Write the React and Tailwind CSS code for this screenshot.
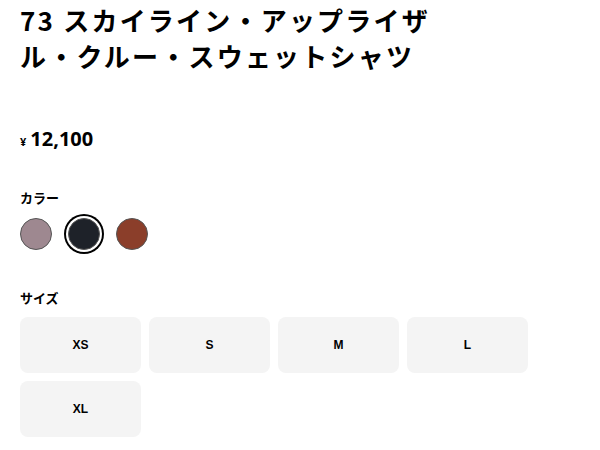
export default function App() {
  const colors = [
    { name: "mauve", cls: "bg-[#9e8890]" },
    { name: "black", cls: "bg-[#1e2229]", selected: true },
    { name: "brown", cls: "bg-[#8b3e2a]" },
  ];
  const sizes = ["XS", "S", "M", "L", "XL"];

  return (
    <div
      className="min-h-screen w-full bg-white px-5 text-black"
      style={{ fontFamily: '"Noto Sans", "Noto Sans CJK JP", sans-serif' }}
    >
      <h1
        className="w-[445px] pt-[2px] text-[26px] font-bold leading-[36px] tracking-[0.085em]"
        style={{ fontFamily: '"Noto Sans CJK JP", sans-serif' }}
      >
        73 スカイライン・アップライザル・クルー・スウェットシャツ
      </h1>

      <p className="mt-[50px] flex items-baseline font-bold">
        <span className="mr-[4px] text-[11px]">¥</span>
        <span className="text-[20px]">12,100</span>
      </p>

      <div className="mt-[34px]">
        <p className="text-[13px] font-bold" style={{ fontFamily: '"Noto Sans CJK JP", sans-serif' }}>
          カラー
        </p>
        <div className="mt-[10px] flex gap-4">
          {colors.map((c) => (
            <button
              key={c.name}
              className={`h-8 w-8 rounded-full border border-[#555] ${c.cls} ${
                c.selected ? "ring-2 ring-black ring-offset-2" : ""
              }`}
            />
          ))}
        </div>
      </div>

      <div className="mt-[38px]">
        <p className="text-[13px] font-bold" style={{ fontFamily: '"Noto Sans CJK JP", sans-serif' }}>
          サイズ
        </p>
        <div className="mt-[10px] flex flex-wrap gap-2">
          {sizes.map((s) => (
            <button
              key={s}
              className="flex h-14 w-[121px] items-center justify-center rounded-lg bg-[#f4f4f4] text-[12px] font-bold"
              style={{ fontFamily: '"Liberation Sans", sans-serif' }}
            >
              {s}
            </button>
          ))}
        </div>
      </div>
    </div>
  );
}
